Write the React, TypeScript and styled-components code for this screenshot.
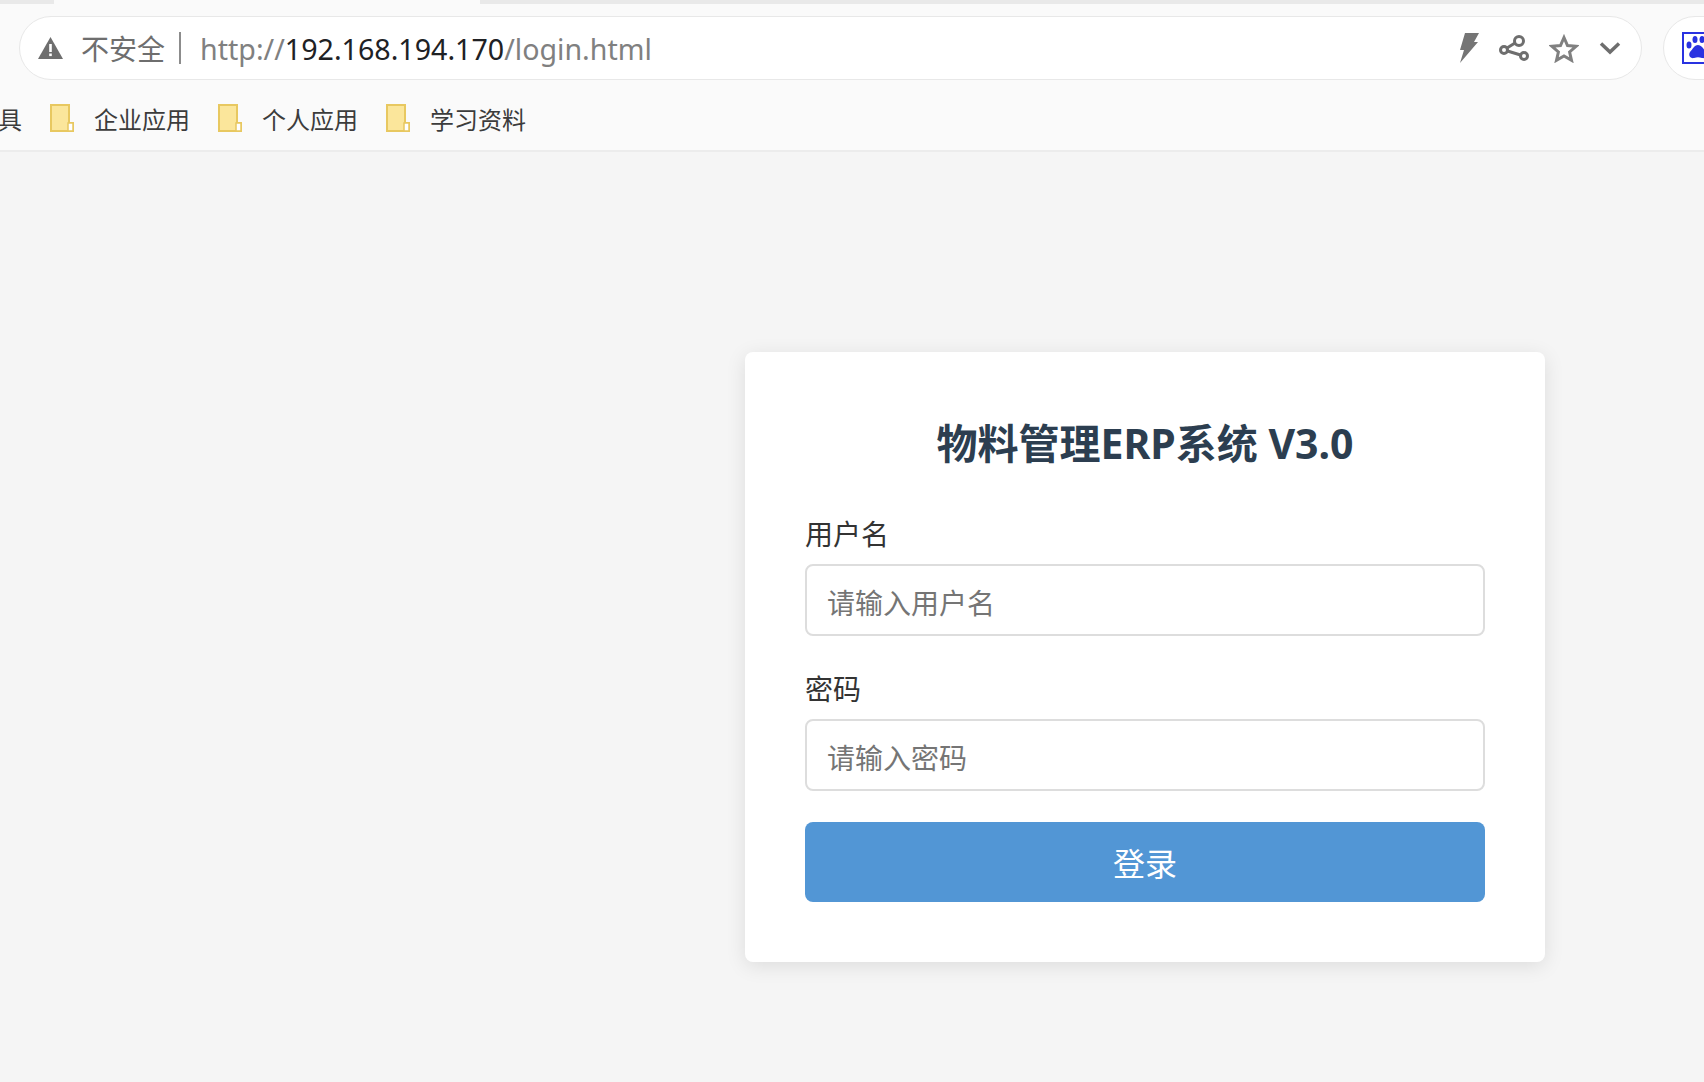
import styled, { createGlobalStyle } from 'styled-components';

const GlobalStyle = createGlobalStyle`
  html, body {
    margin: 0;
    padding: 0;
    height: 100%;
    background: #f5f5f5;
    overflow: hidden;
  }
  * { box-sizing: border-box; }
  body {
    font-family: "Noto Sans", "Noto Sans CJK SC", sans-serif;
  }
`;

const Toolbar = styled.header`
  height: 152px;
  background: #fafafa;
  border-bottom: 2px solid #ececec;
  overflow: hidden;
`;

const TabStrip = styled.div`
  display: flex;
  height: 4px;
  background: #e9e9e9;
`;

const ActiveTab = styled.div`
  width: 426px;
  margin-left: 54px;
  background: #fafafa;
`;

const AddressRow = styled.div`
  display: flex;
  align-items: center;
  gap: 21px;
  height: 64px;
  margin-top: 12px;
  padding-left: 19px;
  width: 1800px;
`;

const AddressPill = styled.div`
  display: flex;
  flex: none;
  align-items: center;
  width: 1623px;
  height: 64px;
  padding: 0 20px 0 18px;
  background: #fff;
  border: 1px solid #e8e8e8;
  border-radius: 32px;
`;

const SecurityText = styled.span`
  margin-left: 18px;
  font-family: "Noto Sans CJK SC", sans-serif;
  font-size: 28px;
  color: #6e6e6e;
`;

const Divider = styled.span`
  width: 2px;
  height: 32px;
  margin: 0 19px 0 14px;
  background: #8c8c8c;
`;

const Url = styled.span`
  flex: 1;
  font-family: "Noto Sans", sans-serif;
  font-size: 28.6px;
  color: #808080;
  white-space: nowrap;
`;

const UrlHost = styled.span`
  color: #202124;
`;

const Actions = styled.div`
  display: flex;
  align-items: center;
  gap: 20px;
`;

const ExtensionPill = styled.div`
  display: flex;
  flex: none;
  align-items: center;
  width: 120px;
  height: 64px;
  padding-left: 18px;
  background: #fff;
  border: 1px solid #e8e8e8;
  border-radius: 32px;
`;

const BookmarkBar = styled.nav`
  display: flex;
  align-items: center;
  height: 68px;
  margin: 4px 0 0 -26px;
  font-family: "Noto Sans CJK SC", sans-serif;
  font-size: 24px;
  color: #3c3c3c;
`;

const Bookmark = styled.a`
  display: flex;
  align-items: center;
  gap: 20px;
  margin-right: 28px;
`;

const ToolsLabel = styled.span`
  margin-right: 28px;
`;

const Main = styled.main`
  padding: 200px 0 0 745px;
`;

const Card = styled.form`
  display: flex;
  flex-direction: column;
  width: 800px;
  height: 610px;
  padding: 60px;
  background: #fff;
  border-radius: 8px;
  box-shadow: 0 4px 20px rgba(0, 0, 0, 0.1);
  font-family: "Noto Sans CJK SC", sans-serif;
`;

const Title = styled.h1`
  margin: 0 0 40px;
  height: 60px;
  line-height: 62px;
  font-family: "Noto Sans", "Noto Sans CJK SC", sans-serif;
  font-size: 41px;
  font-weight: 700;
  text-align: center;
  color: #2c3e50;
`;

const Field = styled.div`
  display: flex;
  flex-direction: column;
  margin-bottom: 31px;
`;

const Label = styled.label`
  height: 40px;
  margin-bottom: 12px;
  line-height: 42px;
  font-size: 28px;
  color: #333;
`;

const Input = styled.input`
  width: 680px;
  height: 72px;
  padding: 4px 20px 0;
  background: #fff;
  border: 2px solid #ddd;
  border-radius: 8px;
  font-family: "Noto Sans CJK SC", sans-serif;
  font-size: 28px;
  outline: none;
  &::placeholder {
    color: #757575;
  }
`;

const Submit = styled.button`
  width: 680px;
  height: 80px;
  padding: 0;
  background: #5296d5;
  border: 0;
  border-radius: 8px;
  font-family: "Noto Sans CJK SC", sans-serif;
  font-size: 32px;
  color: #fff;
`;

const FolderIcon = () => (
  <svg width="24" height="28" viewBox="0 0 24 28">
    <path d="M1 1h18v18h4v8H1z" fill="#fbe69b" stroke="#e8c860" strokeWidth="2" />
    <path d="M18 27v-8h5v8z" fill="#fff" stroke="#e8c860" strokeWidth="1.500" />
  </svg>
);

const WarningIcon = () => (
  <svg width="25" height="22" viewBox="0 0 25 22">
    <path d="M12.500 0 25 22H0z" fill="#6e6e6e" />
    <rect x="11.200" y="7" width="2.600" height="8" fill="#fff" />
    <rect x="11.200" y="16.500" width="2.600" height="2.600" fill="#fff" />
  </svg>
);

const BoltIcon = () => (
  <svg width="20" height="30" viewBox="0 0 20 30">
    <path d="M6 0h14l-5 9h4L1 30l4-13H1z" fill="#757575" />
  </svg>
);

const ShareIcon = () => (
  <svg width="30" height="26" viewBox="0 0 30 26" fill="none" stroke="#6e6e6e" strokeWidth="3">
    <circle cx="20" cy="6" r="4.500" />
    <circle cx="5" cy="15" r="3.500" />
    <circle cx="25" cy="21" r="3.500" />
    <path d="M16 8 8 13M8.500 16 21.500 20" />
  </svg>
);

const StarIcon = () => (
  <svg width="30" height="29" viewBox="0 0 30 29">
    <path
      d="M15 3.500 18.500 11.500 27 12.300 20.600 18 22.500 26.300 15 22 7.500 26.300 9.400 18 3 12.300 11.500 11.500z"
      fill="none"
      stroke="#808080"
      strokeWidth="3"
    />
  </svg>
);

const ChevronIcon = () => (
  <svg width="22" height="14" viewBox="0 0 22 14">
    <path d="M2 2.500 11 11 20 2.500" fill="none" stroke="#6e6e6e" strokeWidth="3.500" />
  </svg>
);

const PawLogo = () => (
  <svg width="32" height="32" viewBox="0 0 32 32">
    <rect x="1" y="1" width="30" height="30" fill="#fff" stroke="#2932e1" strokeWidth="2" />
    <ellipse cx="7" cy="13" rx="2.500" ry="3.500" fill="#2932e1" />
    <ellipse cx="13" cy="7.500" rx="2.500" ry="3.500" fill="#2932e1" />
    <ellipse cx="20" cy="7.500" rx="2.500" ry="3.500" fill="#2932e1" />
    <ellipse cx="26" cy="13" rx="2.500" ry="3.500" fill="#2932e1" />
    <path d="M16 13c4 0 5 4 8 7 2 3 0 7-4 6-3-1-5-1-8 0-4 1-6-3-4-6 3-3 4-7 8-7z" fill="#2932e1" />
  </svg>
);

const bookmarks = ['企业应用', '个人应用', '学习资料'];

const App = () => {
  return (
    <>
      <GlobalStyle />
      <Toolbar>
        <TabStrip>
          <ActiveTab />
        </TabStrip>
        <AddressRow>
          <AddressPill>
            <WarningIcon />
            <SecurityText>不安全</SecurityText>
            <Divider />
            <Url>
              http://<UrlHost>192.168.194.170</UrlHost>/login.html
            </Url>
            <Actions>
              <BoltIcon />
              <ShareIcon />
              <StarIcon />
              <ChevronIcon />
            </Actions>
          </AddressPill>
          <ExtensionPill>
            <PawLogo />
          </ExtensionPill>
        </AddressRow>
        <BookmarkBar>
          <ToolsLabel>工具</ToolsLabel>
          {bookmarks.map((name) => (
            <Bookmark key={name}>
              <FolderIcon />
              {name}
            </Bookmark>
          ))}
        </BookmarkBar>
      </Toolbar>
      <Main>
        <Card>
          <Title>物料管理ERP系统 V3.0</Title>
          <Field>
            <Label htmlFor="username">用户名</Label>
            <Input id="username" placeholder="请输入用户名" />
          </Field>
          <Field>
            <Label htmlFor="password">密码</Label>
            <Input id="password" type="password" placeholder="请输入密码" />
          </Field>
          <Submit type="button">登录</Submit>
        </Card>
      </Main>
    </>
  );
};

export default App;
